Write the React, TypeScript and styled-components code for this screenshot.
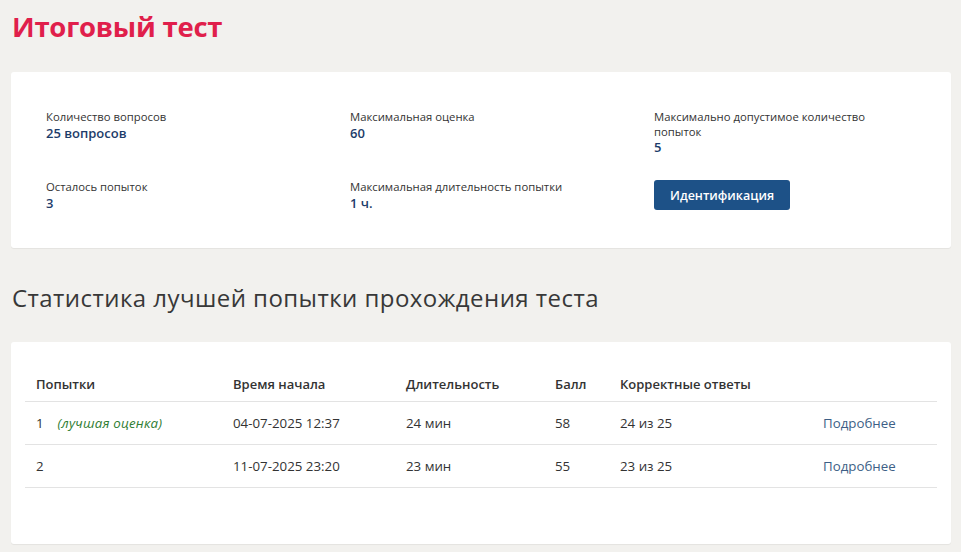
import React from "react";
import styled, { createGlobalStyle } from "styled-components";

const GlobalStyle = createGlobalStyle`
  html, body {
    margin: 0;
    padding: 0;
    background: #f2f1ee;
  }
  body {
    font-family: "Open Sans", "Noto Sans", "Liberation Sans", sans-serif;
    color: #333333;
  }
`;

const Page = styled.div`
  padding: 0 10px 20px 11px;
`;

const Title = styled.h1`
  margin: 9px 0 0 1px;
  font-size: 27.5px;
  line-height: 36px;
  font-weight: 700;
  color: #e01f4b;
  letter-spacing: -0.25px;
`;

const Card = styled.section<{ $pad: string; $top?: number }>`
  background: #ffffff;
  border-radius: 3px;
  box-shadow: 0 1px 1px rgba(0, 0, 0, 0.06);
  padding: ${(p) => p.$pad};
  margin-top: ${(p) => p.$top ?? 0}px;
`;

const InfoGrid = styled.div`
  display: grid;
  grid-template-columns: 304px 304px 250px;
  row-gap: 25px;
`;

const InfoItem = styled.div`
  display: flex;
  flex-direction: column;
  align-items: flex-start;
`;

const Label = styled.span`
  font-size: 11.3px;
  line-height: 14.5px;
  color: #333333;
`;

const Value = styled.span`
  font-size: 13px;
  line-height: 16px;
  font-weight: 600;
  color: #1d3c6a;
`;

const Button = styled.button`
  height: 30px;
  padding: 0 16px;
  border: none;
  border-radius: 3px;
  background: #1d5187;
  color: #ffffff;
  font-family: inherit;
  font-size: 12.5px;
  font-weight: 600;
  cursor: pointer;
`;

const SectionTitle = styled.h2`
  margin: 32px 0 26px 1px;
  font-size: 24px;
  line-height: 36px;
  font-weight: 400;
  color: #383838;
  letter-spacing: 0.45px;
`;

const Table = styled.table`
  width: 100%;
  border-collapse: collapse;
  table-layout: fixed;
  font-size: 13px;
`;

const Th = styled.th`
  text-align: left;
  font-weight: 600;
  color: #333333;
  padding: 16px 11px 8px;
  line-height: 18px;
  border-bottom: 1px solid #e3e3e3;
`;

const Td = styled.td`
  padding: 12px 11px;
  line-height: 18px;
  font-size: 13.3px;
  color: #333333;
  border-bottom: 1px solid #e3e3e3;
`;

const Best = styled.em`
  margin-left: 14px;
  color: #2f7d32;
  font-style: italic;
  letter-spacing: 0.2px;
`;

const DetailsLink = styled.a`
  color: #3d5f86;
  text-decoration: none;
  cursor: pointer;
`;

const rows = [
  { n: "1", best: true, start: "04-07-2025 12:37", dur: "24 мин", score: "58", correct: "24 из 25" },
  { n: "2", best: false, start: "11-07-2025 23:20", dur: "23 мин", score: "55", correct: "23 из 25" },
];

export default function App() {
  return (
    <>
      <GlobalStyle />
      <Page>
        <Title>Итоговый тест</Title>
        <Card $pad="38px 35px 37px 35px" $top={27}>
          <InfoGrid>
            <InfoItem>
              <Label>Количество вопросов</Label>
              <Value>25 вопросов</Value>
            </InfoItem>
            <InfoItem>
              <Label>Максимальная оценка</Label>
              <Value>60</Value>
            </InfoItem>
            <InfoItem>
              <Label>Максимально допустимое количество попыток</Label>
              <Value>5</Value>
            </InfoItem>
            <InfoItem>
              <Label>Осталось попыток</Label>
              <Value>3</Value>
            </InfoItem>
            <InfoItem>
              <Label>Максимальная длительность попытки</Label>
              <Value>1 ч.</Value>
            </InfoItem>
            <InfoItem>
              <Button>Идентификация</Button>
            </InfoItem>
          </InfoGrid>
        </Card>
        <SectionTitle>Статистика лучшей попытки прохождения теста</SectionTitle>
        <Card $pad="17px 14px 56px 14px">
          <Table>
            <colgroup>
              <col style={{ width: 197 }} />
              <col style={{ width: 173 }} />
              <col style={{ width: 149 }} />
              <col style={{ width: 65 }} />
              <col style={{ width: 203 }} />
              <col />
            </colgroup>
            <thead>
              <tr>
                <Th>Попытки</Th>
                <Th>Время начала</Th>
                <Th>Длительность</Th>
                <Th>Балл</Th>
                <Th>Корректные ответы</Th>
                <Th />
              </tr>
            </thead>
            <tbody>
              {rows.map((r) => (
                <tr key={r.n}>
                  <Td>
                    {r.n}
                    {r.best && <Best>(лучшая оценка)</Best>}
                  </Td>
                  <Td>{r.start}</Td>
                  <Td>{r.dur}</Td>
                  <Td>{r.score}</Td>
                  <Td>{r.correct}</Td>
                  <Td>
                    <DetailsLink>Подробнее</DetailsLink>
                  </Td>
                </tr>
              ))}
            </tbody>
          </Table>
        </Card>
      </Page>
    </>
  );
}
